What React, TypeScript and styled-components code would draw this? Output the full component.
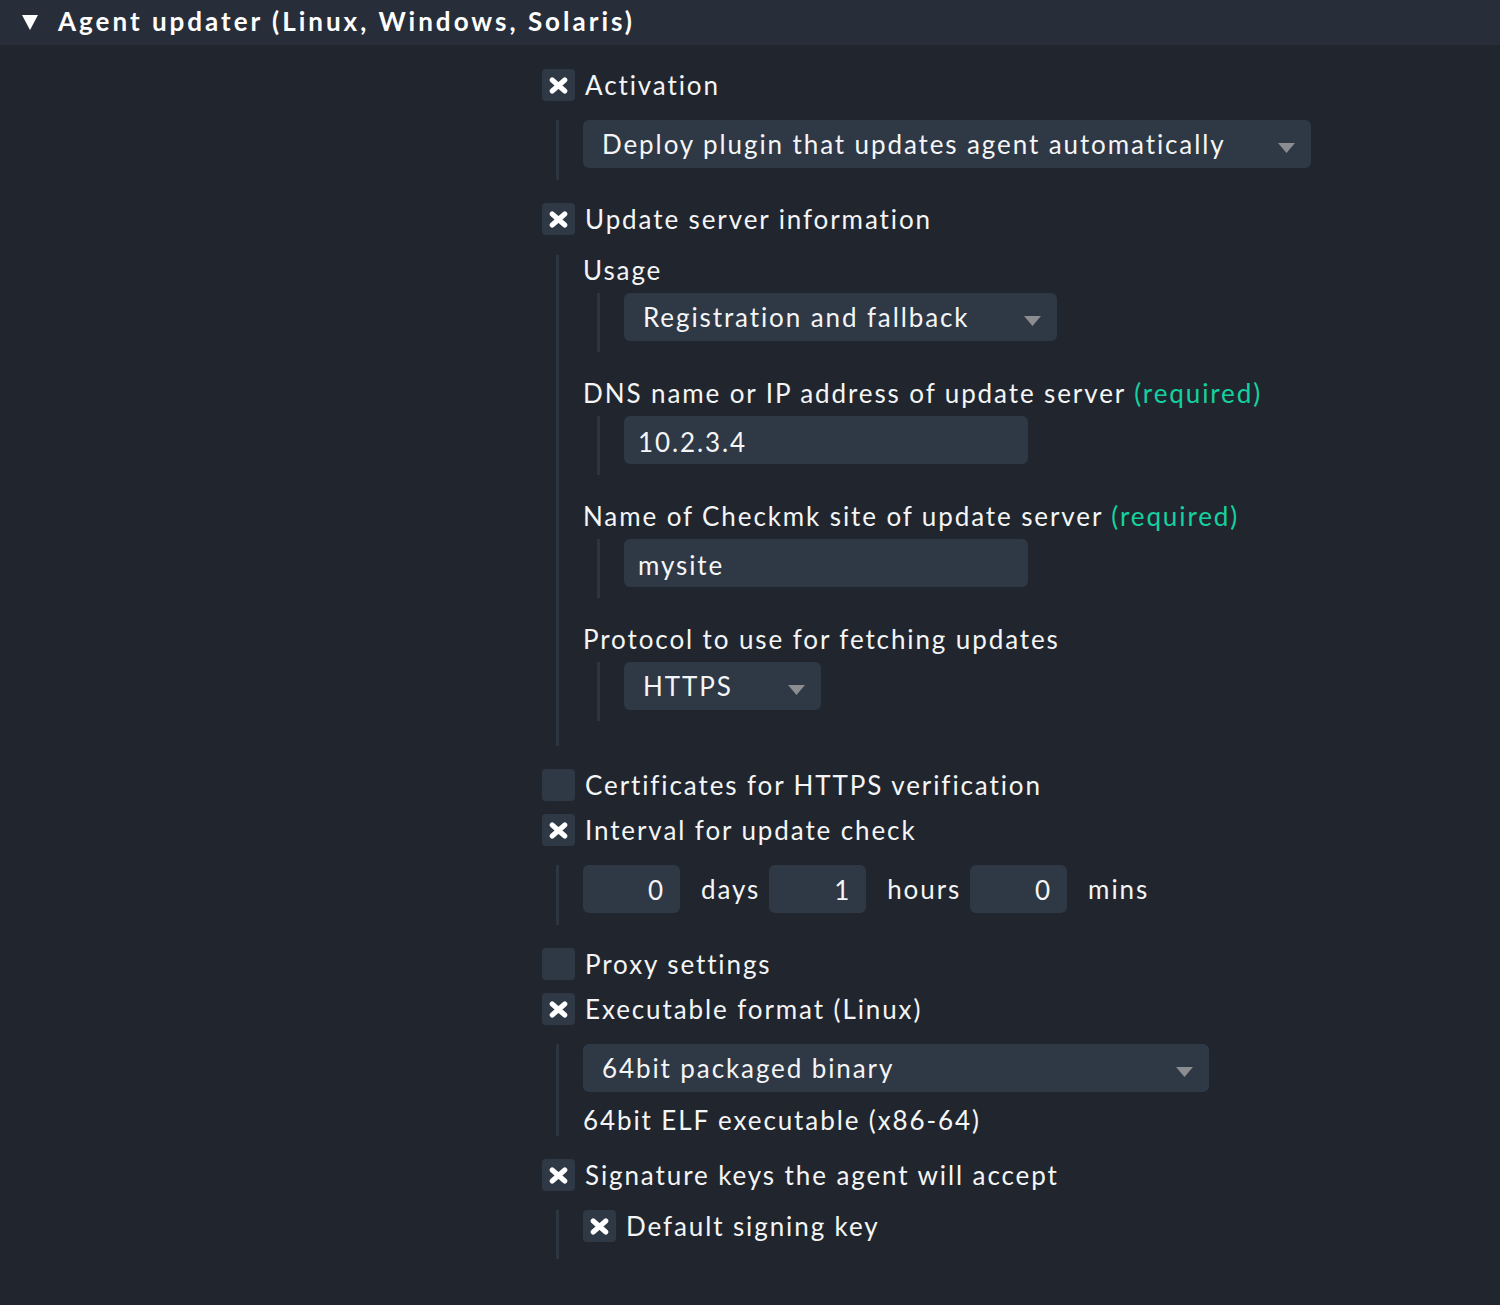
import type { FC, ReactNode } from 'react';
import styled, { createGlobalStyle } from 'styled-components';

const GlobalStyle = createGlobalStyle`
  html, body {
    margin: 0;
    padding: 0;
    background: #21262e;
  }
  body {
    font-family: Lato, "Open Sans", sans-serif;
    color: #f4f5f6;
  }
`;

const CrossIcon: FC = () => (
  <svg width="19" height="17" viewBox="0 0 19 17">
    <path d="M3.2 3 L15.8 14 M15.8 3 L3.2 14" stroke="#ffffff" strokeWidth="5" strokeLinecap="round" />
  </svg>
);

const ArrowIcon: FC = () => (
  <svg width="17" height="10" viewBox="0 0 17 10">
    <polygon points="0,0 17,0 8.5,10" fill="#8b8d90" />
  </svg>
);

type CheckboxRowProps = {
  label: ReactNode;
  checked?: boolean;
};

const CheckboxRow: FC<CheckboxRowProps> = ({ label, checked = true }) => (
  <StyledRow>
    <StyledCheckbox>{checked && <CrossIcon />}</StyledCheckbox>
    <span>{label}</span>
  </StyledRow>
);

type SectionProps = {
  label: ReactNode;
  checked?: boolean;
  children?: ReactNode;
  pad?: number;
};

const Section: FC<SectionProps> = ({ label, checked = true, children, pad = 12 }) => (
  <StyledSection $open={!!children}>
    <CheckboxRow label={label} checked={checked} />
    {children && (
      <StyledNested $top={19} $pad={pad}>
        {children}
      </StyledNested>
    )}
  </StyledSection>
);

type DropdownProps = {
  value: string;
  width: number;
};

const Dropdown: FC<DropdownProps> = ({ value, width }) => (
  <StyledSelect style={{ width }}>
    <span>{value}</span>
    <StyledArrow>
      <ArrowIcon />
    </StyledArrow>
  </StyledSelect>
);

type FieldProps = {
  label: string;
  required?: boolean;
  children: ReactNode;
};

const Field: FC<FieldProps> = ({ label, required, children }) => (
  <StyledField>
    <StyledFieldLabel>
      {label}
      {required && <StyledRequired> (required)</StyledRequired>}
    </StyledFieldLabel>
    <StyledNested $top={0} $pad={11}>
      {children}
    </StyledNested>
  </StyledField>
);

const App: FC = () => (
  <>
    <GlobalStyle />
    <StyledPage>
      <StyledHeader>
        <svg width="16" height="15" viewBox="0 0 16 15">
          <polygon points="0,0 16,0 8,15" fill="#ffffff" />
        </svg>
        <span>Agent updater (Linux, Windows, Solaris)</span>
      </StyledHeader>
      <StyledBody>
        <div />
        <StyledForm>
          <Section label="Activation">
            <Dropdown value="Deploy plugin that updates agent automatically" width={728} />
          </Section>

          <StyledSection $open>
            <CheckboxRow label="Update server information" />
            <StyledNested $top={20} $pad={25}>
              <Field label="Usage">
                <Dropdown value="Registration and fallback" width={433} />
              </Field>
              <Field label="DNS name or IP address of update server" required>
                <StyledInput>10.2.3.4</StyledInput>
              </Field>
              <Field label="Name of Checkmk site of update server" required>
                <StyledInput>mysite</StyledInput>
              </Field>
              <Field label="Protocol to use for fetching updates">
                <Dropdown value="HTTPS" width={197} />
              </Field>
            </StyledNested>
          </StyledSection>

          <Section label="Certificates for HTTPS verification" checked={false} />

          <Section label="Interval for update check" pad={12}>
            <StyledInterval>
              <StyledNumber>0</StyledNumber>
              <StyledUnit>days</StyledUnit>
              <StyledNumber>1</StyledNumber>
              <StyledUnit>hours</StyledUnit>
              <StyledNumber>0</StyledNumber>
              <StyledUnit>mins</StyledUnit>
            </StyledInterval>
          </Section>

          <Section label="Proxy settings" checked={false} />

          <Section label="Executable format (Linux)" pad={1}>
            <Dropdown value="64bit packaged binary" width={626} />
            <StyledHelp>64bit ELF executable (x86-64)</StyledHelp>
          </Section>

          <Section label="Signature keys the agent will accept" pad={17}>
            <CheckboxRow label="Default signing key" />
          </Section>
        </StyledForm>
      </StyledBody>
    </StyledPage>
  </>
);

const StyledPage = styled.div`
  min-height: 1305px;
  background: #21262e;
  border-radius: 0 0 6px 6px;
  font-size: 26px;
  letter-spacing: 1.9px;
`;

const StyledHeader = styled.div`
  display: flex;
  align-items: center;
  gap: 20px;
  height: 45px;
  padding-left: 22px;
  background: #282e39;
  font-weight: bold;
  letter-spacing: 3px;
  color: #ffffff;

  svg {
    margin-top: -1px;
  }

  span {
    margin-top: -4px;
  }
`;

const StyledBody = styled.div`
  display: grid;
  grid-template-columns: 542px 1fr;
  padding-top: 24px;
`;

const StyledForm = styled.div`
  display: flex;
  flex-direction: column;
`;

const StyledSection = styled.div<{ $open: boolean }>`
  margin-bottom: ${({ $open }) => ($open ? 23 : 13)}px;
`;

const StyledRow = styled.div`
  display: flex;
  align-items: center;
  gap: 10px;
  height: 32px;
  line-height: 32px;
`;

const StyledCheckbox = styled.div`
  display: flex;
  align-items: center;
  justify-content: center;
  width: 33px;
  height: 32px;
  border-radius: 4px;
  background: #2f3845;
  flex-shrink: 0;
`;

const StyledNested = styled.div<{ $top: number; $pad: number }>`
  margin: ${({ $top }) => $top}px 0 0 14px;
  padding: 0 0 ${({ $pad }) => $pad}px 24px;
  border-left: 3px solid #2d3541;
`;

const StyledField = styled.div`
  margin-bottom: 26px;

  &:first-child {
    margin-top: 1px;
  }

  &:last-child {
    margin-bottom: 0;
  }
`;

const StyledFieldLabel = styled.div`
  line-height: 30px;
  margin-bottom: 8px;
`;

const StyledRequired = styled.span`
  color: #15d1a0;
`;

const StyledSelect = styled.div`
  display: flex;
  align-items: center;
  box-sizing: border-box;
  height: 48px;
  padding: 0 16px 0 19px;
  border-radius: 6px;
  background: #2f3845;
  white-space: nowrap;
`;

const StyledArrow = styled.span`
  display: flex;
  margin-left: auto;
  padding-top: 8px;
`;

const StyledInput = styled.div`
  display: flex;
  align-items: center;
  box-sizing: border-box;
  width: 404px;
  height: 48px;
  padding: 3px 0 0 14px;
  border-radius: 6px;
  background: #2f3845;
`;

const StyledInterval = styled.div`
  display: flex;
  align-items: center;
`;

const StyledNumber = styled.div`
  display: flex;
  align-items: center;
  justify-content: flex-end;
  box-sizing: border-box;
  width: 97px;
  height: 48px;
  padding: 1px 15px 0 0;
  border-radius: 6px;
  background: #2f3845;
`;

const StyledUnit = styled.span`
  padding: 0 9px 0 21px;
`;

const StyledHelp = styled.div`
  margin-top: 13px;
  line-height: 30px;
`;

export default App;
